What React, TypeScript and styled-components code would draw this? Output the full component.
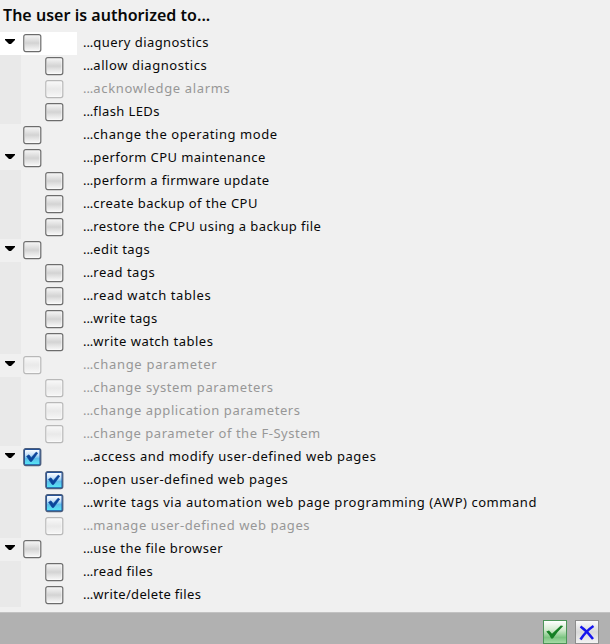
import React from "react";
import styled, { createGlobalStyle } from "styled-components";

const GlobalStyle = createGlobalStyle`
  body { margin: 0; background: #f0f0f0; font-family: "Noto Sans", sans-serif; }
`;

const Panel = styled.main`
  display: flex;
  flex-direction: column;
  width: 610px;
  height: 644px;
  overflow: hidden;
  background: #f0f0f0;
  color: #080808;
`;

const Title = styled.h1`
  flex: none;
  height: 32px;
  box-sizing: border-box;
  margin: 0;
  padding: 5px 0 0 3px;
  font-size: 16px;
  line-height: 21px;
  font-weight: 600;
  letter-spacing: 0.03px;
  white-space: nowrap;
`;

const List = styled.div`
  flex: 1;
`;

const Row = styled.div`
  display: grid;
  grid-template-columns: 21px 56px 1fr;
  height: 23px;
`;

const Gutter = styled.div<{ $nested: boolean; $active: boolean }>`
  padding: 7px 0 0 5px;
  background: ${(p) => (p.$active ? "#fff" : p.$nested ? "#e9e9e9" : "transparent")};
`;

const CheckCell = styled.div<{ $nested: boolean; $active: boolean }>`
  padding: 2px 0 0 ${(p) => (p.$nested ? 24 : 2)}px;
  background: ${(p) => (p.$active ? "#fff" : "transparent")};
`;

const Label = styled.span<{ $disabled: boolean; $spacing: number }>`
  padding-left: 6px;
  font-size: 13px;
  line-height: 20px;
  white-space: nowrap;
  letter-spacing: ${(p) => p.$spacing}px;
  color: ${(p) => (p.$disabled ? "#979797" : "#080808")};
`;

const Dots = styled.span`
  letter-spacing: -0.05px;
`;

const Icon = styled.svg`
  display: block;
`;

const GradientDefs = styled.svg`
  display: block;
  flex: none;
  width: 0;
  height: 0;
`;

const Footer = styled.footer`
  flex: none;
  display: flex;
  justify-content: flex-end;
  gap: 8px;
  height: 32px;
  box-sizing: border-box;
  padding: 7px 11px 0 0;
  border-top: 1px solid #c2c2c2;
  background: #b1b1b1;
`;

const ActionButton = styled.button<{ $accept?: boolean }>`
  display: block;
  width: 24px;
  height: 24px;
  flex: none;
  padding: 0;
  border: 1px solid ${(p) => (p.$accept ? "#4c9458" : "#8d8d8d")};
  background: ${(p) =>
    p.$accept
      ? "linear-gradient(#ffffff 0%, #d3ebcf 40%, #7cc581 75%, #a5dba6)"
      : "linear-gradient(#fafafa, #d9d9d9 50%, #f2f2f2)"};
`;

function Arrow() {
  return (
    <Icon width="10" height="5" viewBox="0 0 10 5">
      <path d="M0 0H10V1L6 5H4L0 1Z" fill="#000" />
    </Icon>
  );
}

function CheckBox({ checked, disabled }: { checked: boolean; disabled: boolean }) {
  const fill = checked ? "url(#blue)" : disabled ? "url(#pale)" : "url(#silver)";
  const edge = checked ? "#4a5d7c" : disabled ? "#b8b8b8" : "#6c6c6c";
  return (
    <Icon width="19" height="19" viewBox="0 0 19 19">
      <rect x="0.8" y="0.6" width="17" height="17" rx="2" fill={checked ? "#1d50a0" : "#fafafa"} stroke={edge} strokeWidth="1.2" />
      <rect x="2" y="2" width="14.5" height="14.2" rx="0.5" fill={fill} />
      {checked && (
        <path d="M3.6 8.3L6 6.8L8.2 9.7L13.2 4.1L14.7 5.2L8.6 13.5H7.2Z" fill="#0b459b" stroke="#0b459b" strokeWidth="0.6" />
      )}
    </Icon>
  );
}

type Item = {
  text: string;
  nested?: boolean;
  disabled?: boolean;
  checked?: boolean;
  open?: boolean;
  active?: boolean;
  spacing: number;
};

const items: Item[] = [
  { text: "query diagnostics", open: true, active: true, spacing: 0.44 },
  { text: "allow diagnostics", nested: true, spacing: 0.56 },
  { text: "acknowledge alarms", nested: true, disabled: true, spacing: 0.65 },
  { text: "flash LEDs", nested: true, spacing: 0.4 },
  { text: "change the operating mode", spacing: 0.57 },
  { text: "perform CPU maintenance", open: true, spacing: 0.42 },
  { text: "perform a firmware update", nested: true, spacing: 0.38 },
  { text: "create backup of the CPU", nested: true, spacing: 0.44 },
  { text: "restore the CPU using a backup file", nested: true, spacing: 0.41 },
  { text: "edit tags", open: true, spacing: 0.42 },
  { text: "read tags", nested: true, spacing: 0.5 },
  { text: "read watch tables", nested: true, spacing: 0.59 },
  { text: "write tags", nested: true, spacing: 0.37 },
  { text: "write watch tables", nested: true, spacing: 0.5 },
  { text: "change parameter", open: true, disabled: true, spacing: 0.69 },
  { text: "change system parameters", nested: true, disabled: true, spacing: 0.61 },
  { text: "change application parameters", nested: true, disabled: true, spacing: 0.6 },
  { text: "change parameter of the F-System", nested: true, disabled: true, spacing: 0.53 },
  { text: "access and modify user-defined web pages", open: true, checked: true, spacing: 0.52 },
  { text: "open user-defined web pages", nested: true, checked: true, spacing: 0.5 },
  { text: "write tags via automation web page programming (AWP) command", nested: true, checked: true, spacing: 0.54 },
  { text: "manage user-defined web pages", nested: true, disabled: true, spacing: 0.57 },
  { text: "use the file browser", open: true, spacing: 0.48 },
  { text: "read files", nested: true, spacing: 0.4 },
  { text: "write/delete files", nested: true, spacing: 0.33 },
];

export default function App() {
  return (
    <Panel>
      <GlobalStyle />
      <GradientDefs aria-hidden="true">
        <defs>
          <linearGradient id="silver" x2="0" y2="1">
            <stop offset="0" stopColor="#f2f2f2" />
            <stop offset="0.5" stopColor="#d3d3d3" />
            <stop offset="0.65" stopColor="#dedede" />
            <stop offset="1" stopColor="#f5f5f5" />
          </linearGradient>
          <linearGradient id="pale" x2="0" y2="1">
            <stop offset="0" stopColor="#f7f7f7" />
            <stop offset="0.5" stopColor="#e9e9e9" />
            <stop offset="1" stopColor="#f5f5f5" />
          </linearGradient>
          <linearGradient id="blue" x2="0" y2="1">
            <stop offset="0" stopColor="#fbfdff" />
            <stop offset="0.35" stopColor="#c5e0f8" />
            <stop offset="0.6" stopColor="#5fbdea" />
            <stop offset="1" stopColor="#55e5f4" />
          </linearGradient>
        </defs>
      </GradientDefs>
      <Title>The user is authorized to...</Title>
      <List>
        {items.map(({ text, nested = false, disabled = false, checked = false, open, active = false, spacing }) => (
          <Row key={text}>
            <Gutter $nested={nested} $active={active}>{open && <Arrow />}</Gutter>
            <CheckCell $nested={nested} $active={active}>
              <CheckBox checked={checked} disabled={disabled} />
            </CheckCell>
            <Label $disabled={disabled} $spacing={spacing}>
              <Dots>...</Dots>
              {text}
            </Label>
          </Row>
        ))}
      </List>
      <Footer>
        <ActionButton $accept aria-label="Accept">
          <Icon width="22" height="22" viewBox="0 0 22 22">
            <path d="M2.3 10.5L5 9.5L8 12.8L16.8 4.5L19.2 5Q12.5 11.5 8.9 17.5H7.1Q5.5 13.5 2.3 10.5Z" fill="#158024" />
          </Icon>
        </ActionButton>
        <ActionButton aria-label="Cancel">
          <Icon width="22" height="22" viewBox="0 0 22 22">
            <path d="M4.5 5.5Q11 10 17 18M17.5 5Q10 10 4.5 18.5" fill="none" stroke="#1616ee" strokeWidth="2.5" />
          </Icon>
        </ActionButton>
      </Footer>
    </Panel>
  );
}
